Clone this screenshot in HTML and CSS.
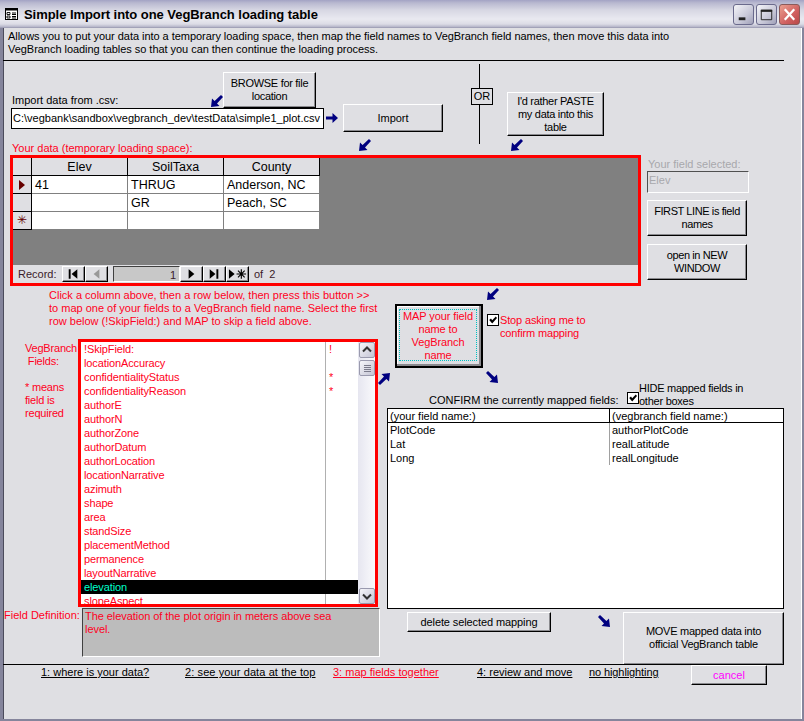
FILE: index.html
```html
<!DOCTYPE html>
<html lang="en">
<head>
<meta charset="utf-8">
<title>Simple Import into one VegBranch loading table</title>
<link rel="stylesheet" href="styles.css">
</head>
<body>
<svg class="defs" width="0" height="0" aria-hidden="true">
  <symbol id="arrow" viewBox="0 0 12 12"><path d="M0 12 L1 3.5 L3.6 6 L10 0 L12 2 L6 8.4 L8.5 11 Z"/></symbol>
  <symbol id="arrow-right" viewBox="0 0 12 10"><path d="M0 3.5 H6.5 V0 L12 5 L6.5 10 V6.5 H0 Z"/></symbol>
</svg>
<div class="window">
  <header class="titlebar">
    <svg class="app-icon" viewBox="0 0 13 12"><rect x=".5" y=".5" width="12" height="11" fill="#fff" stroke="#000"/><rect x="0" y="0" width="13" height="2.5"/><path d="M2 4.5h3v2H2zM2 8h3v2H2z" fill="none" stroke="#000" stroke-width=".9"/><path d="M7 5h4M7 6.5h4M7 8.5h4M7 10h4" stroke="#000"/></svg>
    <span class="title-text">Simple Import into one VegBranch loading table</span>
    <div class="win-btns">
      <button class="win-btn"><svg viewBox="0 0 20 20"><rect x="5" y="13" width="7" height="3" fill="#222"/></svg></button>
      <button class="win-btn"><svg viewBox="0 0 20 20"><path d="M4.5 5.5h11v10h-11z M4.5 6.5h11" fill="none" stroke="#222"/><path d="M4 5h12v2H4z" fill="#222"/></svg></button>
      <button class="win-btn win-close"><svg viewBox="0 0 20 20"><path d="M5 4.5 L15 15.5 M15 4.5 L5 15.5" stroke="#fff" stroke-width="2.4"/></svg></button>
    </div>
  </header>
  <main class="form">
    <p class="c intro">Allows you to put your data into a temporary loading space, then map the field names to VegBranch field names, then move this data into<br>VegBranch loading tables so that you can then continue the loading process.</p>
    <div class="c rule rule-top"></div>

    <button class="c btn browse">BROWSE for file<br>location</button>
    <label class="c import-label">Import data from .csv:</label>
    <div class="c path-input">C:\vegbank\sandbox\vegbranch_dev\testData\simple1_plot.csv</div>
    <svg class="c arw arw-path"><use href="#arrow-right"/></svg>
    <svg class="c arw arw-browse"><use href="#arrow"/></svg>
    <button class="c btn import">Import</button>
    <div class="c or-line"></div>
    <div class="c or-box">OR</div>
    <button class="c btn paste">I'd rather PASTE<br>my data into this<br>table</button>
    <svg class="c arw arw-import"><use href="#arrow"/></svg>
    <svg class="c arw arw-paste"><use href="#arrow"/></svg>

    <label class="c red your-data">Your data (temporary loading space):</label>
    <section class="c data-box">
      <div class="sheet-area">
        <div class="sheet">
          <div class="sel hd"></div><div class="th">Elev</div><div class="th">SoilTaxa</div><div class="th">County</div>
          <div class="sel"><span class="cur"></span></div><div class="td">41</div><div class="td">THRUG</div><div class="td">Anderson, NC</div>
          <div class="sel"></div><div class="td"></div><div class="td">GR</div><div class="td">Peach, SC</div>
          <div class="sel star">✳</div><div class="td"></div><div class="td"></div><div class="td"></div>
        </div>
      </div>
      <nav class="recnav">
        <span class="rec-label">Record:</span>
        <button class="nb nb-first"><svg viewBox="0 0 22 14"><path d="M6 2h2v10H6zM15 2v10L9 7z"/></svg></button>
        <button class="nb nb-dim"><svg viewBox="0 0 22 14"><path d="M14 2v10L8 7z" fill="#999"/></svg></button>
        <div class="rec-num">1</div>
        <button class="nb"><svg viewBox="0 0 22 14"><path d="M8 2v10l6-5z"/></svg></button>
        <button class="nb"><svg viewBox="0 0 22 14"><path d="M6 2v10l6-5zM13 2h2v10h-2z"/></svg></button>
        <button class="nb"><svg viewBox="0 0 22 14"><path d="M2 2v10l6-5z"/><path d="M15 2v10M10 7h10M11.500 3.500l7 7M18.500 3.500l-7 7" stroke="#000" stroke-width="1.200"/></svg></button>
        <span class="rec-of">of&nbsp; 2</span>
      </nav>
    </section>

    <label class="c dim field-sel-label">Your field selected:</label>
    <div class="c field-sel">Elev</div>
    <button class="c btn first-line">FIRST LINE is field<br>names</button>
    <button class="c btn new-window">open in NEW<br>WINDOW</button>

    <p class="c red instructions">Click a column above, then a row below, then press this button &gt;&gt;<br>to map one of your fields to a VegBranch field name. Select the first<br>row below (!SkipField:) and MAP to skip a field above.</p>
    <svg class="c arw arw-map"><use href="#arrow"/></svg>
    <button class="c map-btn"><span class="map-focus">MAP your field<br>name to<br>VegBranch<br>name</span></button>
    <span class="c check check-stop"></span>
    <label class="c red stop-label">Stop asking me to<br>confirm mapping</label>

    <p class="c red fields-label">VegBranch<br>&nbsp;Fields:<br><br>* means<br>field is<br>required</p>
    <section class="c list-box">
      <div class="list">
        <div class="row"><span>!SkipField:</span><span class="req">!</span></div>
        <div class="row"><span>locationAccuracy</span></div>
        <div class="row"><span>confidentialityStatus</span><span class="req">*</span></div>
        <div class="row"><span>confidentialityReason</span><span class="req">*</span></div>
        <div class="row"><span>authorE</span></div>
        <div class="row"><span>authorN</span></div>
        <div class="row"><span>authorZone</span></div>
        <div class="row"><span>authorDatum</span></div>
        <div class="row"><span>authorLocation</span></div>
        <div class="row"><span>locationNarrative</span></div>
        <div class="row"><span>azimuth</span></div>
        <div class="row"><span>shape</span></div>
        <div class="row"><span>area</span></div>
        <div class="row"><span>standSize</span></div>
        <div class="row"><span>placementMethod</span></div>
        <div class="row"><span>permanence</span></div>
        <div class="row"><span>layoutNarrative</span></div>
        <div class="row selected"><span>elevation</span></div>
        <div class="row"><span>slopeAspect</span></div>
      </div>
      <div class="scrollbar">
        <div class="sb-btn"><svg viewBox="0 0 14 14"><path d="M3 8.500 L7 4.500 L11 8.500" fill="none" stroke="#333" stroke-width="2"/></svg></div>
        <div class="sb-thumb"><i></i><i></i><i></i><i></i></div>
        <div class="sb-track"></div>
        <div class="sb-btn"><svg viewBox="0 0 14 14"><path d="M3 5.500 L7 9.500 L11 5.500" fill="none" stroke="#333" stroke-width="2"/></svg></div>
      </div>
    </section>
    <svg class="c arw arw-ne"><use href="#arrow"/></svg>
    <svg class="c arw arw-se1"><use href="#arrow"/></svg>

    <label class="c confirm-label">CONFIRM the currently mapped fields:</label>
    <span class="c check check-hide"></span>
    <label class="c hide-label">HIDE mapped fields in<br>other boxes</label>
    <section class="c map-table">
      <div class="mt-head"><span>(your field name:)</span><span>(vegbranch field name:)</span></div>
      <div class="mt-row"><span>PlotCode</span><span>authorPlotCode</span></div>
      <div class="mt-row"><span>Lat</span><span>realLatitude</span></div>
      <div class="mt-row"><span>Long</span><span>realLongitude</span></div>
    </section>

    <label class="c red def-label">Field Definition:</label>
    <div class="c def-box">The elevation of the plot origin in meters above sea<br>level.</div>
    <button class="c btn delete">delete selected mapping</button>
    <svg class="c arw arw-se2"><use href="#arrow"/></svg>
    <button class="c btn move">MOVE mapped data into<br>official VegBranch table</button>

    <div class="c rule rule-bottom"></div>
    <a class="c link l1">1: where is your data?</a>
    <a class="c link l2">2: see your data at the top</a>
    <a class="c link l3">3: map fields together</a>
    <a class="c link l4">4: review and move</a>
    <a class="c link l5">no highlighting</a>
    <button class="c btn cancel">cancel</button>
  </main>
</div>
</body>
</html>
```
FILE: styles.css
```css
* { box-sizing: border-box; }
html, body { margin: 0; padding: 0; }
body { width: 804px; height: 721px; overflow: hidden; background: #dfdfe3; }
.defs { position: absolute; }
.window {
  width: 804px; height: 721px; display: flex; flex-direction: column;
  font: 11px/13px "Liberation Sans", sans-serif; color: #000; background: #dfdfe3;
}
.titlebar {
  height: 28px; flex: none; display: flex; align-items: center; padding: 0 4px 0 5px;
  background: linear-gradient(#a3a3c4 0, #b9b9d0 3px, #d7d7e3 10px, #e9e9f0 19px, #dcdce6 24px, #b4b4c8 27px, #8f8fa8 28px);
}
.app-icon { width: 13px; height: 12px; margin: 0 6px 0 0; flex: none; }
.title-text { font-weight: 700; font-size: 13px; letter-spacing: -.05px; color: #000; flex: 1; }
.win-btns { display: flex; gap: 2px; }
.win-btn {
  width: 21px; height: 21px; padding: 0; border: 1px solid #6a6a8c; border-radius: 3px;
  background: linear-gradient(135deg, #f4f4f8, #c8c8d8 60%, #a0a0b8);
}
.win-btn svg { display: block; width: 19px; height: 19px; }
.win-close { background: linear-gradient(135deg, #eaa090, #d06060 60%, #b84848); border-color: #8a5a5a; }

.form {
  flex: 1; position: relative;
  border-left: 3px solid #85859c; border-right: 2px solid #85859c; border-bottom: 2px solid #85859c;
  box-shadow: inset 1px 0 0 #4c4c5c, inset -1px 0 0 #fff;
}
.c { position: absolute; margin: 0; white-space: nowrap; }
.red { color: #ff0022; }
.dim { color: #a8a8ac; }
.arw { width: 12px; height: 12px; fill: #000080; }

.btn {
  padding: 0; font: inherit; color: #000; text-align: center; background: #dfdfe3;
  border: 1px solid; border-color: #fff #000 #000 #fff;
  box-shadow: inset -1px -1px 0 #8a8a8e;
}

/* Coordinates below are relative to .form (origin at 3,28 on the window) */
.intro { left: 5px; top: 2px; letter-spacing: -.04px; }
.rule { left: 0; height: 1px; background: #000; width: 781px; }
.rule-top { top: 32px; }
.rule-bottom { top: 636px; width: 780px; }

.browse { left: 220px; top: 44px; width: 93px; height: 36px; letter-spacing: -.3px; }
.import-label { left: 9px; top: 66px; }
.path-input { left: 8px; top: 80px; width: 313px; height: 21px; background: #fff; border: 1px solid #000; padding: 3px 0 0 1px; }
.arw-path { left: 323px; top: 84px; }
.arw-browse { left: 208px; top: 67px; }
.import { left: 340px; top: 76px; width: 100px; height: 28px; }
.or-line { left: 476px; top: 36px; width: 1px; height: 80px; background: #000; }
.or-box { left: 468px; top: 60px; width: 22px; height: 17px; background: #dfdfe3; border: 1px solid #000; text-align: center; line-height: 15px; }
.paste { left: 504px; top: 64px; width: 97px; height: 44px; letter-spacing: -.3px; }
.arw-import { left: 356px; top: 111px; }
.arw-paste { left: 508px; top: 111px; }

.your-data { left: 9px; top: 114px; }
.data-box { left: 7px; top: 127px; width: 631px; height: 131px; border: 3px solid #ff0000; display: flex; flex-direction: column; background: #dfdfe3; }
.sheet-area { flex: 1; background: #808080; }
.sheet { display: grid; grid-template-columns: 19px 96px 96px 96px; grid-template-rows: 18px 18px 18px 18px; width: 307px; }
.th { background: #dfdfe3; border-right: 1px solid #000; border-bottom: 1px solid #000; font-size: 12.5px; line-height: 17px; padding-top: 1px; text-align: center; }
.td { background: #fff; border-right: 1px solid #808080; border-bottom: 1px solid #808080; font-size: 12.5px; line-height: 17px; padding: 1px 0 0 3px; }
.sel { background: #dfdfe3; border-right: 1px solid #000; border-bottom: 1px solid #000; display: flex; align-items: center; justify-content: center; }
.cur { width: 0; height: 0; border-left: 6px solid #660000; border-top: 5.500px solid transparent; border-bottom: 5.500px solid transparent; }
.star { color: #660000; font-size: 12px; }
.recnav { height: 18px; flex: none; display: flex; align-items: center; color: #3a1a2a; }
.rec-label { width: 49px; padding-left: 5px; }
.nb { width: 23px; height: 16px; padding: 0; background: #dfdfe3; border: 1px solid; border-color: #fff #000 #000 #fff; box-shadow: inset -1px -1px 0 #8a8a8e; }
.nb svg { display: block; width: 21px; height: 14px; }
.nb-dim { margin-right: 5px; }
.rec-num { width: 67px; height: 16px; background: #c8c8c8; border: 1px solid; border-color: #404040 #fff #fff #404040; text-align: right; padding-right: 3px; line-height: 16px; }
.rec-of { margin-left: 5px; }

.field-sel-label { left: 645px; top: 130px; }
.field-sel { left: 644px; top: 143px; width: 102px; height: 22px; border: 1px solid; border-color: #505050 #fff #fff #505050; color: #a8a8ac; padding: 2px 0 0 1px; }
.first-line { left: 644px; top: 172px; width: 100px; height: 36px; letter-spacing: -.4px; }
.new-window { left: 644px; top: 216px; width: 100px; height: 36px; letter-spacing: -.4px; }

.instructions { left: 46px; top: 261px; }
.arw-map { left: 484px; top: 260px; }
.map-btn { left: 392px; top: 276px; width: 88px; height: 64px; padding: 3px 4px 5px 2px; font: inherit; color: #ff0022; background: #dfdfe3; border: 2px solid #000; box-shadow: inset -2px -2px 0 #8a8a8e, inset 1px 1px 0 #fff; }
.map-focus { display: block; height: 100%; padding-top: 0; border: 1px dotted #00c0c0; line-height: 13px; text-align: center; letter-spacing: -.1px; }
.check { width: 12px; height: 12px; background: #fff; border: 1px solid #000; }
.check::after { content: ""; position: absolute; inset: 0; background: #000; clip-path: polygon(12% 50%, 30% 34%, 42% 52%, 78% 14%, 90% 30%, 42% 84%); }
.check-stop { left: 484px; top: 286px; }
.stop-label { left: 497px; top: 286px; letter-spacing: -.15px; }

.fields-label { left: 22px; top: 314px; }
.fields-label { letter-spacing: -.2px; }
.list-box { left: 75px; top: 311px; width: 300px; height: 268px; border: 3px solid #ff0000; background: #fff; display: flex; overflow: hidden; }
.list { flex: 1; overflow: hidden; letter-spacing: -.12px; }
.row { height: 14px; display: flex; padding-left: 3px; line-height: 14px; color: #ff0022; background: linear-gradient(#b0b0b0, #b0b0b0) 244px 0 / 1px 100% no-repeat; }
.row span:first-child { width: 243px; }
.row .req { padding-left: 2px; }
.selected { background: #000; color: #00ffcc; }
.scrollbar { width: 17px; flex: none; display: flex; flex-direction: column; background: linear-gradient(90deg, #e6e6f0, #fafafc); }
.sb-btn, .sb-thumb { width: 16px; margin-left: 1px; border: 1px solid #9a9aae; border-radius: 2px; background: linear-gradient(135deg, #f6f6fa, #c4c4d4); flex: none; }
.sb-btn { height: 16px; }
.sb-btn svg { display: block; width: 14px; height: 14px; }
.sb-thumb { height: 16px; margin-top: 2px; display: flex; flex-direction: column; align-items: center; justify-content: center; gap: 1px; }
.sb-thumb i { display: block; width: 7px; height: 1px; background: #7a7a8a; }
.sb-track { flex: 1; }
.arw-ne { left: 375px; top: 345px; transform: rotate(180deg); }
.arw-se1 { left: 483px; top: 343px; transform: rotate(-90deg); }

.confirm-label { left: 426px; top: 366px; }
.check-hide { left: 624px; top: 364px; }
.hide-label { left: 636px; top: 354px; letter-spacing: -.25px; }
.map-table { left: 384px; top: 380px; width: 397px; height: 201px; background: #fff; border: 1px solid #000; }
.mt-head { height: 14px; display: flex; border-bottom: 1px solid #000; line-height: 14px; }
.mt-row { height: 14px; display: flex; line-height: 14px; }
.mt-head span:first-child, .mt-row span:first-child { width: 222px; padding-left: 2px; border-right: 1px solid #a0a0a0; flex: none; }
.mt-head span:first-child { border-right-color: #000; }
.mt-head span:last-child, .mt-row span:last-child { padding-left: 2px; }

.def-label { left: 1px; top: 581px; }
.def-box { left: 79px; top: 580px; width: 298px; height: 49px; background: #bcbcbc; color: #ff0022; border: 1px solid; border-color: #404040 #fff #fff #404040; padding: 1px 0 0 2px; letter-spacing: -.06px; }
.delete { left: 404px; top: 584px; width: 144px; height: 20px; letter-spacing: -.1px; }
.arw-se2 { left: 595px; top: 587px; transform: rotate(-90deg); }
.move { left: 620px; top: 584px; width: 161px; height: 53px; padding-bottom: 2px; letter-spacing: -.25px; }

.link { top: 638px; text-decoration: underline; }
.l1 { left: 38px; }
.l2 { left: 182px; letter-spacing: .1px; }
.l3 { left: 330px; color: #ff0022; }
.l4 { left: 474px; }
.l5 { left: 586px; letter-spacing: -.1px; }
.cancel { left: 688px; top: 637px; width: 76px; height: 20px; color: #ff00ff; }
```
